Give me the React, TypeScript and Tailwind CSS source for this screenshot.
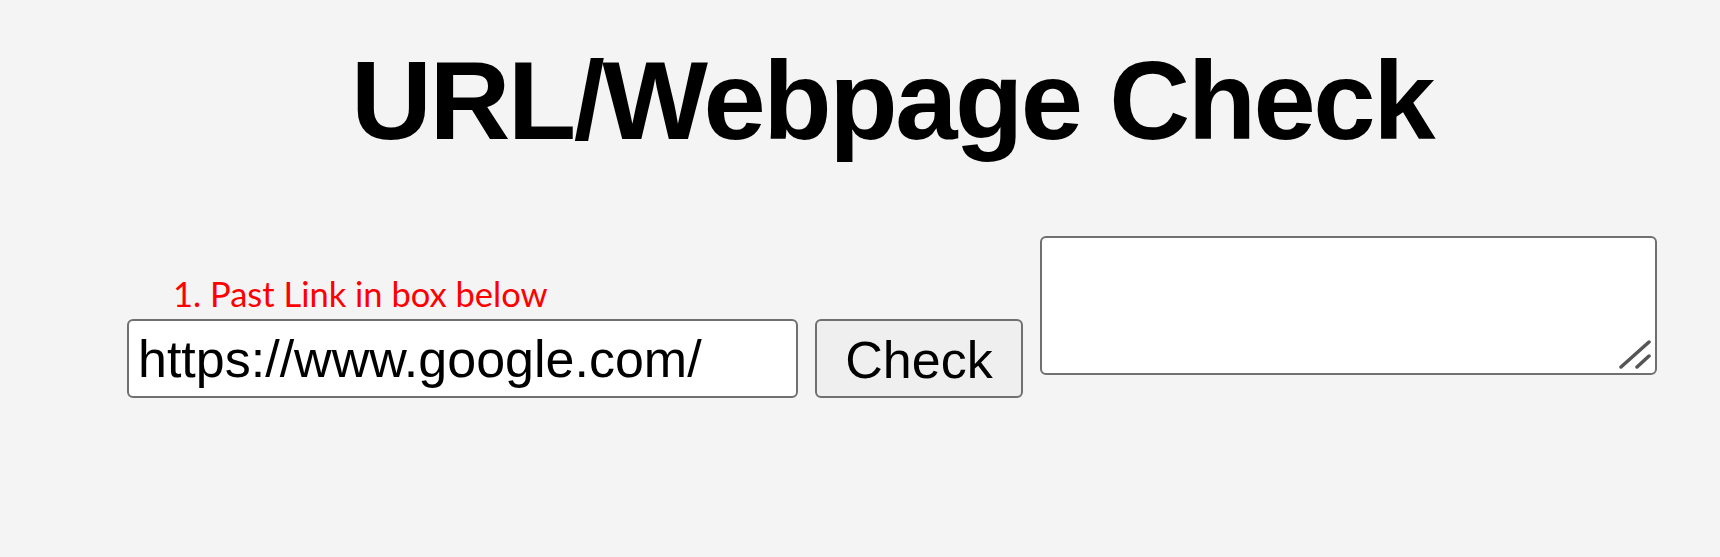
import React, { useState } from 'react';

const App = () => {
  const [url, setUrl] = useState('https://www.google.com/');
  const [result, setResult] = useState('');

  return (
    <div className="min-h-screen bg-[#f4f4f4] pl-[64px] font-['Liberation_Sans',Arial,sans-serif] text-black">
      <h1 className="pt-[45px] text-center text-[112px] font-bold leading-none tracking-[-2.5px]">
        URL/Webpage Check
      </h1>

      <div className="mt-[79px] flex items-end justify-center gap-[17px]">
        <div className="flex flex-col">
          <span className="ml-[46px] mb-[6px] font-['Lato','Open_Sans',sans-serif] text-[34.5px] leading-[38px] text-[#ff0000]">
            1. Past Link in box below
          </span>
          <input
            value={url}
            onChange={(e) => setUrl(e.target.value)}
            className="h-[79px] w-[671px] rounded-[6px] border-2 border-[#707070] bg-white pl-[9px] text-[52px] text-black outline-none"
          />
        </div>

        <button
          onClick={() => setResult(url ? 'Checking ' + url : '')}
          className="h-[79px] w-[208px] rounded-[6px] border-2 border-[#707070] bg-[#efefef] text-[52px] text-black"
        >
          Check
        </button>

        <div className="relative mb-[23px]">
          <textarea
            value={result}
            onChange={(e) => setResult(e.target.value)}
            className="block h-[139px] w-[617px] resize-none rounded-[6px] border-2 border-[#707070] bg-white outline-none"
          />
          {/* resize grip, drawn at the zoomed size */}
          <svg className="absolute right-[5px] bottom-[5px]" width="34" height="30" viewBox="0 0 34 30">
            <path d="M3 27 L31 2 M19 27 L31 16" stroke="#555555" strokeWidth="3.5" strokeLinecap="round" fill="none" />
          </svg>
        </div>
      </div>
    </div>
  );
};

export default App;
